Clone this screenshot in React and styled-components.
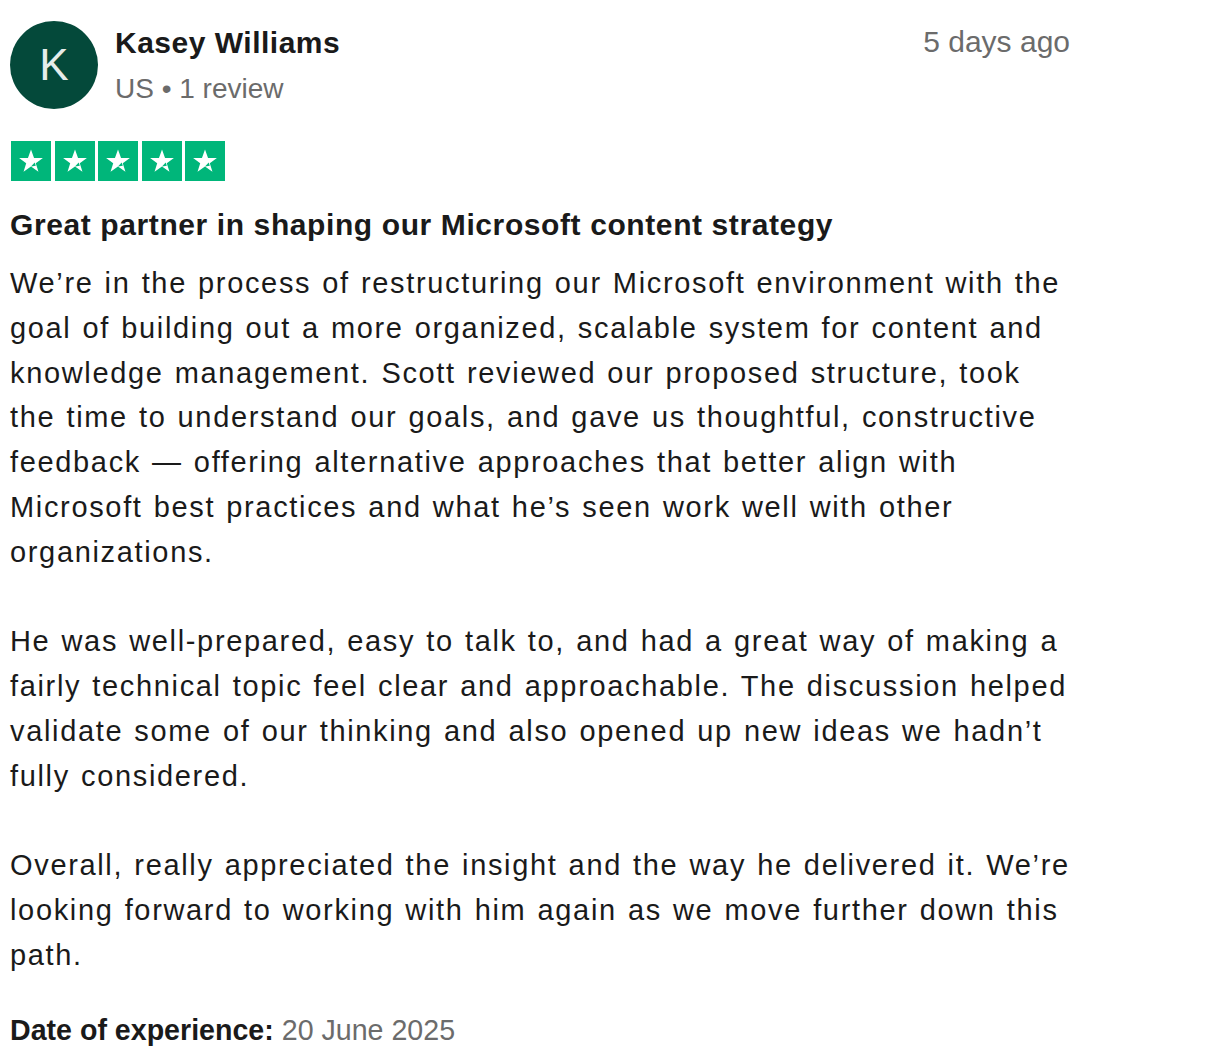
import styled, { createGlobalStyle } from "styled-components";

const GlobalStyle = createGlobalStyle`
  body {
    margin: 0;
    background: #ffffff;
    font-family: "Liberation Sans", Arial, Helvetica, sans-serif;
    color: #1a1a1a;
  }
`;

const Card = styled.article`
  width: 1060px;
  padding: 21px 0 0 10px;
`;

const Header = styled.header`
  display: flex;
  align-items: flex-start;
`;

const Avatar = styled.div`
  width: 88px;
  height: 88px;
  border-radius: 50%;
  background: #04493a;
  color: #e6ecea;
  display: flex;
  align-items: center;
  justify-content: center;
  font-size: 44px;
  flex-shrink: 0;
`;

const Consumer = styled.div`
  flex: 1;
  margin-left: 17px;
  padding-top: 2px;
`;

const Name = styled.div`
  font-weight: 700;
  font-size: 30px;
  letter-spacing: 0.5px;
  line-height: 40px;
  color: #1a1a1a;
`;

const Meta = styled.div`
  font-size: 28px;
  line-height: 40px;
  color: #6b6b6b;
  margin-top: 6px;
`;

const Time = styled.time`
  font-size: 30px;
  line-height: 40px;
  color: #6b6b6b;
  margin-top: 1px;
`;

const Stars = styled.div`
  display: flex;
  gap: 3.5px;
  margin: 32px 0 0 1px;
`;

const StarBox = styled.span`
  width: 40px;
  height: 40px;
  background: #00b67a;
  display: flex;
  align-items: center;
  justify-content: center;
`;

const Title = styled.h2`
  margin: 24px 0 0;
  font-size: 30px;
  letter-spacing: 0.6px;
  line-height: 40px;
  font-weight: 700;
  color: #1a1a1a;
`;

const Body = styled.div`
  margin-top: 16px;
  font-size: 29px;
  letter-spacing: 1.66px;
  word-spacing: 1.4px;
  line-height: 44.8px;
  color: #1a1a1a;
`;

const Paragraph = styled.p`
  margin: 0 0 44.8px;
  &:last-child {
    margin-bottom: 0;
  }
`;

const Line = styled.span`
  display: block;
  white-space: nowrap;
`;

const Experience = styled.p`
  margin: 32px 0 0;
  font-size: 28.6px;
  line-height: 40px;
  color: #6b6b6b;
`;

const Label = styled.strong`
  font-weight: 700;
  color: #1a1a1a;
`;

const paragraphs = [
  [
    "We\u2019re in the process of restructuring our Microsoft environment with the",
    "goal of building out a more organized, scalable system for content and",
    "knowledge management. Scott reviewed our proposed structure, took",
    "the time to understand our goals, and gave us thoughtful, constructive",
    "feedback \u2014 offering alternative approaches that better align with",
    "Microsoft best practices and what he\u2019s seen work well with other",
    "organizations.",
  ],
  [
    "He was well-prepared, easy to talk to, and had a great way of making a",
    "fairly technical topic feel clear and approachable. The discussion helped",
    "validate some of our thinking and also opened up new ideas we hadn\u2019t",
    "fully considered.",
  ],
  [
    "Overall, really appreciated the insight and the way he delivered it. We\u2019re",
    "looking forward to working with him again as we move further down this",
    "path.",
  ],
];

const Star = () => (
  <StarBox>
    <svg width="28" height="28" viewBox="0 0 24 24">
      <path
        d="M12 2.2l2.6 7.2h7.6l-6.1 4.5 2.3 7.3L12 16.7l-6.4 4.5 2.3-7.3-6.1-4.5h7.6z"
        fill="#ffffff"
      />
      <path d="M15.2 13.2l.9 2.9-4.1 .6z" fill="#00b67a" />
    </svg>
  </StarBox>
);

export default function App() {
  return (
    <>
      <GlobalStyle />
      <Card>
        <Header>
          <Avatar>K</Avatar>
          <Consumer>
            <Name>Kasey Williams</Name>
            <Meta>US • 1 review</Meta>
          </Consumer>
          <Time>5 days ago</Time>
        </Header>
        <Stars>
          {[0, 1, 2, 3, 4].map((i) => (
            <Star key={i} />
          ))}
        </Stars>
        <Title>Great partner in shaping our Microsoft content strategy</Title>
        <Body>
          {paragraphs.map((lines, i) => (
            <Paragraph key={i}>
              {lines.map((l, j) => (
                <Line key={j}>{l}</Line>
              ))}
            </Paragraph>
          ))}
        </Body>
        <Experience>
          <Label>Date of experience:</Label> 20 June 2025
        </Experience>
      </Card>
    </>
  );
}
